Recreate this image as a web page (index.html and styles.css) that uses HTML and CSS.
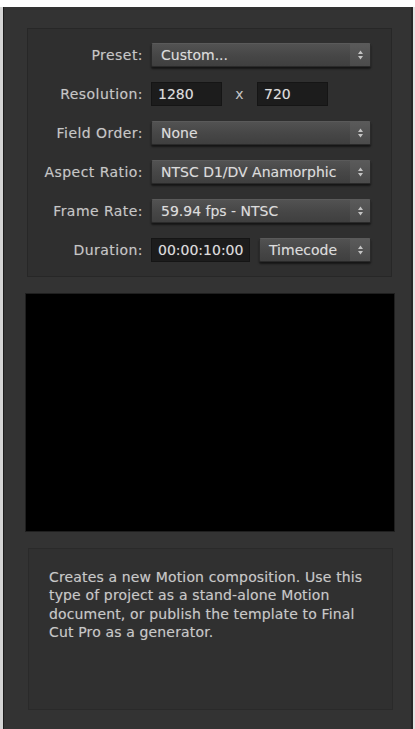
FILE: index.html
```html
<!DOCTYPE html>
<html>
<head>
<meta charset="utf-8">
<link rel="stylesheet" href="styles.css">
</head>
<body>
<div class="window">
  <div class="settings">
    <div class="row">
      <span class="label">Preset:</span>
      <div class="popup wide"><span>Custom...</span><span class="arrows"><svg width="7" height="12" viewBox="0 0 7 12"><path d="M3.5 1.5 L6 5 L1 5 Z M3.5 10.5 L6 7 L1 7 Z" fill="#c4c4c4"/></svg></span></div>
    </div>
    <div class="row">
      <span class="label">Resolution:</span>
      <div class="field res">1280</div>
      <span class="times">x</span>
      <div class="field res">720</div>
    </div>
    <div class="row">
      <span class="label">Field Order:</span>
      <div class="popup wide"><span>None</span><span class="arrows"><svg width="7" height="12" viewBox="0 0 7 12"><path d="M3.5 1.5 L6 5 L1 5 Z M3.5 10.5 L6 7 L1 7 Z" fill="#c4c4c4"/></svg></span></div>
    </div>
    <div class="row">
      <span class="label">Aspect Ratio:</span>
      <div class="popup wide"><span>NTSC D1/DV Anamorphic</span><span class="arrows"><svg width="7" height="12" viewBox="0 0 7 12"><path d="M3.5 1.5 L6 5 L1 5 Z M3.5 10.5 L6 7 L1 7 Z" fill="#c4c4c4"/></svg></span></div>
    </div>
    <div class="row">
      <span class="label">Frame Rate:</span>
      <div class="popup wide"><span>59.94 fps - NTSC</span><span class="arrows"><svg width="7" height="12" viewBox="0 0 7 12"><path d="M3.5 1.5 L6 5 L1 5 Z M3.5 10.5 L6 7 L1 7 Z" fill="#c4c4c4"/></svg></span></div>
    </div>
    <div class="row">
      <span class="label">Duration:</span>
      <div class="field dur">00:00:10:00</div>
      <div class="popup small"><span>Timecode</span><span class="arrows"><svg width="7" height="12" viewBox="0 0 7 12"><path d="M3.5 1.5 L6 5 L1 5 Z M3.5 10.5 L6 7 L1 7 Z" fill="#c4c4c4"/></svg></span></div>
    </div>
  </div>
  <div class="preview"></div>
  <div class="description">
    <p>Creates a new Motion composition. Use this type of project as a stand-alone Motion document, or publish the template to Final Cut Pro as a generator.</p>
  </div>
</div>
</body>
</html>
```

FILE: styles.css
```css
html, body {
  margin: 0;
  padding: 0;
  background: #ffffff;
}

body {
  font-family: "DejaVu Sans", "Liberation Sans", sans-serif;
  font-size: 14px;
  overflow: hidden;
}

.window {
  margin: 7px 2px 0 3px;
  height: 722px;
  background: #333333;
  border-left: 1px solid #1c1c1c;
  border-right: 2px solid #262626;
  box-shadow: -3px 0 0 #d4d4d4, 2px 0 0 #e2e2e2;
  padding: 21px 16px 0 21px;
  box-sizing: border-box;
}

.settings {
  margin: 0 3px 0 2px;
  height: 249px;
  box-sizing: border-box;
  border: 1px solid #272727;
  background: #2f2f2f;
  padding: 14px 20px 0 0;
  display: flex;
  flex-direction: column;
  gap: 15px;
}

.row {
  display: flex;
  align-items: center;
  height: 24px;
}

.label {
  width: 115px;
  text-align: right;
  color: #c6c6c6;
  margin-right: 8px;
  letter-spacing: 0.45px;
  white-space: nowrap;
  text-shadow: 0 0 1px rgba(200, 200, 200, 0.35);
}

.popup {
  height: 24px;
  box-sizing: border-box;
  display: flex;
  align-items: center;
  justify-content: space-between;
  padding-left: 9px;
  color: #dcdcdc;
  background: linear-gradient(#525252, #474747 50%, #3f3f3f);
  border-radius: 2px;
  border: 1px solid #2a2a2a;
  border-top-color: #5a5a5a;
  box-shadow: 0 2px 2px rgba(0, 0, 0, 0.55);
  white-space: nowrap;
  text-shadow: 0 0 1px rgba(220, 220, 220, 0.35);
}

.popup.wide {
  width: 220px;
}

.popup.small {
  width: 112px;
  margin-left: 9px;
}

.arrows {
  width: 20px;
  height: 22px;
  display: flex;
  align-items: center;
  justify-content: center;
  background: linear-gradient(#5a5a5a, #4b4b4b);
}

.field {
  height: 24px;
  box-sizing: border-box;
  background: #1c1c1c;
  border: 1px solid #151515;
  color: #dedede;
  display: flex;
  align-items: center;
  padding-left: 6px;
  white-space: nowrap;
  text-shadow: 0 0 1px rgba(220, 220, 220, 0.35);
}

.field.res {
  width: 71px;
}

.field.dur {
  width: 99px;
}

.times {
  width: 35px;
  text-align: center;
  color: #c6c6c6;
}

.preview {
  margin-top: 16px;
  height: 239px;
  background: #000000;
  border: 1px solid #1f1f1f;
  box-sizing: border-box;
}

.description {
  margin: 16px 2px 0 3px;
  height: 162px;
  box-sizing: border-box;
  border: 1px solid #2a2a2a;
  background: #303030;
  padding: 19px 20px 0 20px;
}

.description p {
  margin: 0;
  color: #c8c8c8;
  line-height: 18.3px;
  letter-spacing: 0.15px;
  text-shadow: 0 0 1px rgba(200, 200, 200, 0.35);
}
```
